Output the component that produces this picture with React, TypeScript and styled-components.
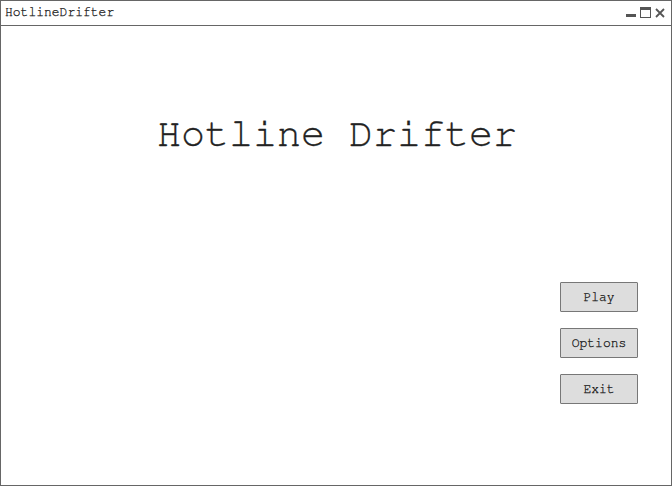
import React from "react";
import styled, { createGlobalStyle } from "styled-components";

const MONO = `"Nimbus Mono PS", "Nimbus Mono L", "FreeMono", "Courier New", Courier, "Liberation Mono", monospace`;

const Global = createGlobalStyle`
  html, body { margin: 0; padding: 0; background: #fff; }
  * { box-sizing: border-box; }
`;

const Window = styled.div`
  width: 672px;
  height: 486px;
  border: 1px solid #666;
  background: #fff;
  display: flex;
  flex-direction: column;
  font-family: ${MONO};
  color: #333;
`;

const TitleBar = styled.div`
  height: 25px;
  border-bottom: 1px solid #666;
  display: flex;
  align-items: center;
  justify-content: space-between;
  padding: 0 6px 1px 4px;
`;

const TitleText = styled.span`
  font-size: 13px;
  color: #111;
  -webkit-text-stroke: 0.25px #111;
`;

const Controls = styled.div`
  display: flex;
  align-items: center;
  gap: 4px;
`;

const Content = styled.div`
  flex: 1;
  display: flex;
  flex-direction: column;
`;

const GameTitle = styled.h1`
  margin: 86px 0 0 0;
  font-size: 40px;
  font-weight: normal;
  line-height: 45px;
  text-align: center;
  color: #222;
  -webkit-text-stroke: 0.3px #222;
  padding-left: 2px;
`;

const Menu = styled.div`
  margin-top: 125px;
  align-self: flex-end;
  margin-right: 33px;
  display: flex;
  flex-direction: column;
  gap: 16px;
`;

const MenuButton = styled.button`
  width: 78px;
  height: 30px;
  border: 1px solid #777;
  border-radius: 1px;
  background: #dddddd;
  font-family: ${MONO};
  font-size: 13px;
  color: #111;
  -webkit-text-stroke: 0.25px #111;
  padding: 0;
  cursor: pointer;
`;

const MinIcon = () => (
  <svg width="10" height="12" viewBox="0 0 10 12">
    <rect x="0" y="7" width="10" height="3" fill="#555" />
  </svg>
);

const MaxIcon = () => (
  <svg width="11" height="12" viewBox="0 0 11 12">
    <rect x="0.5" y="0.5" width="10" height="10" fill="none" stroke="#555" />
    <rect x="0" y="0" width="11" height="3" fill="#555" />
  </svg>
);

const CloseIcon = () => (
  <svg width="10" height="12" viewBox="0 0 10 12">
    <path d="M1 2 L9 10 M9 2 L1 10" stroke="#555" strokeWidth="1.8" />
  </svg>
);

export default function App() {
  return (
    <>
      <Global />
      <Window>
        <TitleBar>
          <TitleText>HotlineDrifter</TitleText>
          <Controls>
            <MinIcon />
            <MaxIcon />
            <CloseIcon />
          </Controls>
        </TitleBar>
        <Content>
          <GameTitle>Hotline Drifter</GameTitle>
          <Menu>
            <MenuButton>Play</MenuButton>
            <MenuButton>Options</MenuButton>
            <MenuButton>Exit</MenuButton>
          </Menu>
        </Content>
      </Window>
    </>
  );
}
